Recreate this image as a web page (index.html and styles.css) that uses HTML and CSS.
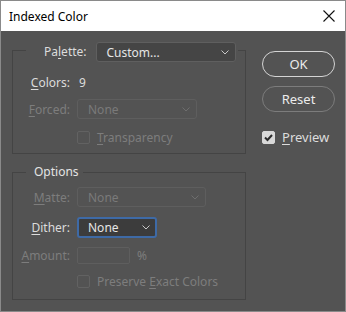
FILE: index.html
```html
<!DOCTYPE html>
<html lang="en">
  <head>
    <meta charset="UTF-8" />
    <meta name="viewport" content="width=device-width, initial-scale=1.0" />
    <title>Indexed Color</title>
    <link rel="stylesheet" href="styles.css">
  </head>
  <body>
    <div class="window">
      <div class="titlebar">
        <span class="title">Indexed Color</span>
        <svg class="close" width="12" height="12" viewBox="0 0 12 12">
          <path d="M0.5 0.5 L11.5 11.5 M11.5 0.5 L0.5 11.5" stroke="#111" stroke-width="1.1" fill="none" />
        </svg>
      </div>

      <div class="content">
        <div class="main">
          <!-- PALETTE -->
          <fieldset class="group group-palette">
            <legend class="legend-palette">
              <div class="legend-row">
                <span class="label">Pa<u>l</u>ette:</span>
                <div class="dropdown dd-palette">
                  <span>Custom...</span>
                  <svg class="chevron" width="8" height="5" viewBox="0 0 8 5"><path d="M0.5 0.5 L4 4 L7.5 0.5" stroke="#c8c8c8" fill="none" /></svg>
                </div>
              </div>
            </legend>
            <div class="rows rows-palette">
              <div class="row">
                <span class="label"><u>C</u>olors:</span>
                <span class="value">9</span>
              </div>
              <div class="row row-forced">
                <span class="label dim"><u>F</u>orced:</span>
                <div class="dropdown disabled dd-forced">
                  <span>None</span>
                  <svg class="chevron" width="8" height="5" viewBox="0 0 8 5"><path d="M0.5 0.5 L4 4 L7.5 0.5" stroke="#6e6e6e" fill="none" /></svg>
                </div>
              </div>
              <div class="row row-check">
                <span></span>
                <div class="check-line">
                  <span class="checkbox"></span>
                  <span class="dim"><u>T</u>ransparency</span>
                </div>
              </div>
            </div>
          </fieldset>

          <!-- OPTIONS -->
          <fieldset class="group group-options">
            <legend class="legend-options">Options</legend>
            <div class="rows rows-options">
              <div class="row">
                <span class="label dim"><u>M</u>atte:</span>
                <div class="dropdown disabled dd-matte">
                  <span>None</span>
                  <svg class="chevron" width="8" height="5" viewBox="0 0 8 5"><path d="M0.5 0.5 L4 4 L7.5 0.5" stroke="#6e6e6e" fill="none" /></svg>
                </div>
              </div>
              <div class="row row-dither">
                <span class="label"><u>D</u>ither:</span>
                <div class="dropdown focused dd-dither">
                  <span>None</span>
                  <svg class="chevron" width="8" height="5" viewBox="0 0 8 5"><path d="M0.5 0.5 L4 4 L7.5 0.5" stroke="#c8c8c8" fill="none" /></svg>
                </div>
              </div>
              <div class="row row-amount">
                <span class="label dim"><u>A</u>mount:</span>
                <div class="amount">
                  <span class="input"></span>
                  <span class="dim percent">%</span>
                </div>
              </div>
              <div class="row row-preserve">
                <span></span>
                <div class="check-line">
                  <span class="checkbox"></span>
                  <span class="dim">Preserve <u>E</u>xact Colors</span>
                </div>
              </div>
            </div>
          </fieldset>
        </div>

        <div class="side">
          <div class="button button-ok">OK</div>
          <div class="button button-reset">Reset</div>
          <div class="check-line preview">
            <span class="checkbox checked">
              <svg width="13" height="13" viewBox="0 0 13 13"><path d="M3 6.5 L5.5 9 L10 4" stroke="#2b2b2b" stroke-width="2" fill="none" /></svg>
            </span>
            <span class="label-on"><u>P</u>review</span>
          </div>
        </div>
      </div>
    </div>
  </body>
</html>
```

FILE: styles.css
```css
* {
  margin: 0px;
  padding: 0px;
  box-sizing: border-box;
}

body {
  font-family: "Noto Sans", "Open Sans", sans-serif;
  font-size: 12px;
  background-color: #535353;
}

u {
  text-decoration: underline;
  text-underline-offset: 2px;
}

/*STRUCTURE*/
.window {
  width: 346px;
  height: 312px;
  border: 1px solid #8a8a8a;
  background-color: #535353;
  display: flex;
  flex-direction: column;
}

.titlebar {
  height: 30px;
  background-color: #ffffff;
  display: flex;
  align-items: center;
  justify-content: space-between;
  padding: 0 9px 0 8px;
}

.title {
  color: #000000;
  font-size: 12px;
}

.close {
  margin-right: 1px;
}

.content {
  display: flex;
  padding: 0 0 0 11px;
}

.main {
  width: 234px;
}

.side {
  width: 73px;
  margin-left: 16px;
  padding-top: 20px;
  display: flex;
  flex-direction: column;
}

/*GROUPS*/
.group {
  width: 234px;
  border: 1px solid #444444;
  padding: 0;
  margin: 0;
  min-width: 0;
}

.group-palette {
  margin-top: 7px;
}

.group-options {
  margin-top: 10px;
}

.legend-palette {
  margin-left: 13px;
  padding: 0 2px 0 0;
}

.legend-row {
  display: flex;
  align-items: flex-end;
  height: 24px;
}

.legend-row .label {
  padding-left: 18px;
  margin-right: 9px;
  line-height: 20px;
}

.legend-options {
  margin-left: 13px;
  padding: 0 4px 0 8px;
  line-height: 16px;
  color: #e4e4e4;
}

.rows {
  display: flex;
  flex-direction: column;
}

.rows-palette {
  padding: 10px 0 6px 0;
}

.rows-options {
  padding: 7px 0 8px 0;
}

.row {
  display: grid;
  grid-template-columns: 57px auto;
  column-gap: 7px;
  align-items: center;
  height: 20px;
}

.row-forced {
  margin-top: 7px;
}

.row-check {
  margin-top: 8px;
}

.row-dither {
  margin-top: 10px;
}

.row-amount {
  margin-top: 8px;
}

.row-preserve {
  margin-top: 6px;
}

/*COMPONENTS*/
.label {
  color: #dcdcdc;
  text-align: right;
  white-space: nowrap;
}

.label.dim,
.dim {
  color: #7d7d7d;
}

.value {
  color: #dcdcdc;
  padding-left: 2px;
}

.dropdown {
  height: 20px;
  display: flex;
  align-items: center;
  justify-content: space-between;
  padding: 0 6px 0 10px;
  border-radius: 3px;
  border: 1px solid #5f5f5f;
  background-color: #454545;
  color: #e6e6e6;
}

.dropdown.disabled {
  background-color: #535353;
  border-color: #5e5e5e;
  color: #7a7a7a;
}

.dropdown.focused {
  height: 21px;
  border: 2px solid #3e6aa6;
  background-color: #3c3c3c;
  padding-left: 9px;
  padding-right: 5px;
}

.dd-palette {
  width: 140px;
}

.dd-forced {
  width: 120px;
}

.dd-matte {
  width: 129px;
}

.dd-dither {
  width: 80px;
}

.amount {
  display: flex;
  align-items: center;
}

.input {
  width: 53px;
  height: 17px;
  border: 1px solid #5e5e5e;
  border-radius: 2px;
}

.percent {
  margin-left: 7px;
}

.check-line {
  display: flex;
  align-items: center;
  gap: 7px;
}

.checkbox {
  width: 13px;
  height: 13px;
  border: 1px solid #626262;
  border-radius: 2px;
  flex: none;
}

.checkbox.checked {
  background-color: #d8d8d8;
  border-color: #d8d8d8;
  display: flex;
}

.checkbox.checked svg {
  margin: -1px;
}

.button {
  height: 26px;
  border-radius: 13px;
  display: flex;
  align-items: center;
  justify-content: center;
  color: #ebebeb;
  font-size: 13px;
}

.button-ok {
  border: 1px solid #d4d4d4;
}

.button-reset {
  margin-top: 9px;
  border: 1px solid #7c7c7c;
}

.preview {
  margin-top: 16px;
}

.label-on {
  color: #dcdcdc;
  font-size: 13px;
}
```
